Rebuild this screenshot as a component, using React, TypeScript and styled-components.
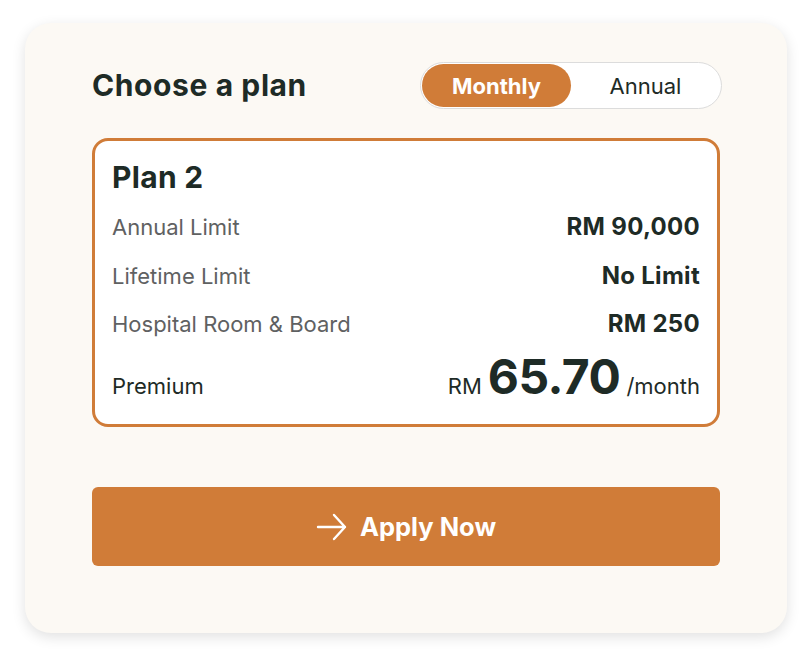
import React, { useState } from 'react';
import styled, { createGlobalStyle } from 'styled-components';

const colors = {
  orange: '#d07c38',
  ink: '#1e2b26',
  grey: '#5f6162',
  cream: '#fcf9f4',
  line: '#dcdcdc',
};

const GlobalStyle = createGlobalStyle`
  html, body {
    margin: 0;
    padding: 0;
    background: #ffffff;
    font-family: Inter, "Open Sans", sans-serif;
  }
`;

const Page = styled.div`
  width: 802px;
  height: 658px;
  padding: 23px 15px 25px 25px;
  box-sizing: border-box;
`;

const Card = styled.div`
  height: 610px;
  background: ${colors.cream};
  border-radius: 26px;
  box-shadow: 0 4px 14px rgba(0, 0, 0, 0.12);
  padding: 39px 67px 0 67px;
  box-sizing: border-box;
`;

const Header = styled.div`
  display: flex;
  align-items: center;
  justify-content: space-between;
  height: 47px;
`;

const Title = styled.h2`
  margin: 0;
  font-size: 30px;
  font-weight: 700;
  color: ${colors.ink};
  letter-spacing: 0.6px;
  line-height: 40px;
  margin-top: -2px;
`;

const Toggle = styled.div`
  display: flex;
  width: 302px;
  height: 47px;
  box-sizing: border-box;
  border: 1.5px solid ${colors.line};
  border-radius: 24px;
  background: #fff;
  padding: 1px;
  margin-right: -2px;
`;

const ToggleOption = styled.button<{ $active: boolean }>`
  flex: ${(p) => (p.$active ? '0 0 149px' : '1')};
  border: none;
  border-radius: 22px;
  font-family: inherit;
  font-size: 22px;
  font-weight: ${(p) => (p.$active ? 700 : 400)};
  color: ${(p) => (p.$active ? '#fff' : colors.ink)};
  background: ${(p) => (p.$active ? colors.orange : 'transparent')};
  cursor: pointer;
  padding: 0;
`;

const PlanBox = styled.div`
  margin-top: 29px;
  border: 3px solid ${colors.orange};
  border-radius: 16px;
  background: #fff;
  padding: 18px 17px 20px 17px;
  box-sizing: border-box;
  height: 289px;
`;

const PlanName = styled.div`
  font-size: 30px;
  font-weight: 700;
  color: ${colors.ink};
  line-height: 36px;
  margin-bottom: 18px;
  letter-spacing: 0.3px;
`;

const Row = styled.div`
  display: flex;
  justify-content: space-between;
  align-items: baseline;
  height: 48.5px;
  line-height: 28px;
`;

const Label = styled.span<{ $dark?: boolean }>`
  font-size: 22px;
  color: ${(p) => (p.$dark ? colors.ink : colors.grey)};
`;

const Value = styled.span`
  font-size: 24px;
  font-weight: 700;
  color: ${colors.ink};
  letter-spacing: 0.3px;
`;

const PremiumRow = styled(Row)`
  height: auto;
  margin-top: -7px;
`;

const Price = styled.span`
  display: flex;
  align-items: baseline;
  gap: 6px;
  color: ${colors.ink};
`;

const Currency = styled.span`
  font-size: 22px;
`;

const Amount = styled.span`
  font-size: 48px;
  font-weight: 700;
  line-height: 50px;
  letter-spacing: -0.5px;
`;

const Period = styled.span`
  font-size: 22px;
`;

const ApplyButton = styled.button`
  margin-top: 60px;
  width: 100%;
  height: 79px;
  border: none;
  border-radius: 6px;
  background: ${colors.orange};
  color: #fff;
  font-family: inherit;
  font-size: 25.5px;
  font-weight: 700;
  display: flex;
  align-items: center;
  justify-content: center;
  gap: 12px;
  cursor: pointer;
`;

function ArrowRight() {
  return (
    <svg width="32" height="28" viewBox="0 0 32 28" fill="none">
      <path
        d="M2 14h27M18 2l11 12-11 12"
        stroke="#fff"
        strokeWidth="2.4"
        strokeLinecap="round"
        strokeLinejoin="round"
      />
    </svg>
  );
}

const benefits = [
  { label: 'Annual Limit', value: 'RM 90,000' },
  { label: 'Lifetime Limit', value: 'No Limit' },
  { label: 'Hospital Room & Board', value: 'RM 250' },
];

export default function App() {
  const [period, setPeriod] = useState<'monthly' | 'annual'>('monthly');

  return (
    <Page>
      <GlobalStyle />
      <Card>
        <Header>
          <Title>Choose a plan</Title>
          <Toggle>
            <ToggleOption
              $active={period === 'monthly'}
              onClick={() => setPeriod('monthly')}
            >
              Monthly
            </ToggleOption>
            <ToggleOption
              $active={period === 'annual'}
              onClick={() => setPeriod('annual')}
            >
              Annual
            </ToggleOption>
          </Toggle>
        </Header>
        <PlanBox>
          <PlanName>Plan 2</PlanName>
          {benefits.map((b) => (
            <Row key={b.label}>
              <Label>{b.label}</Label>
              <Value>{b.value}</Value>
            </Row>
          ))}
          <PremiumRow>
            <Label $dark>Premium</Label>
            <Price>
              <Currency>RM</Currency>
              <Amount>65.70</Amount>
              <Period>/month</Period>
            </Price>
          </PremiumRow>
        </PlanBox>
        <ApplyButton type="button">
          <ArrowRight />
          Apply Now
        </ApplyButton>
      </Card>
    </Page>
  );
}
